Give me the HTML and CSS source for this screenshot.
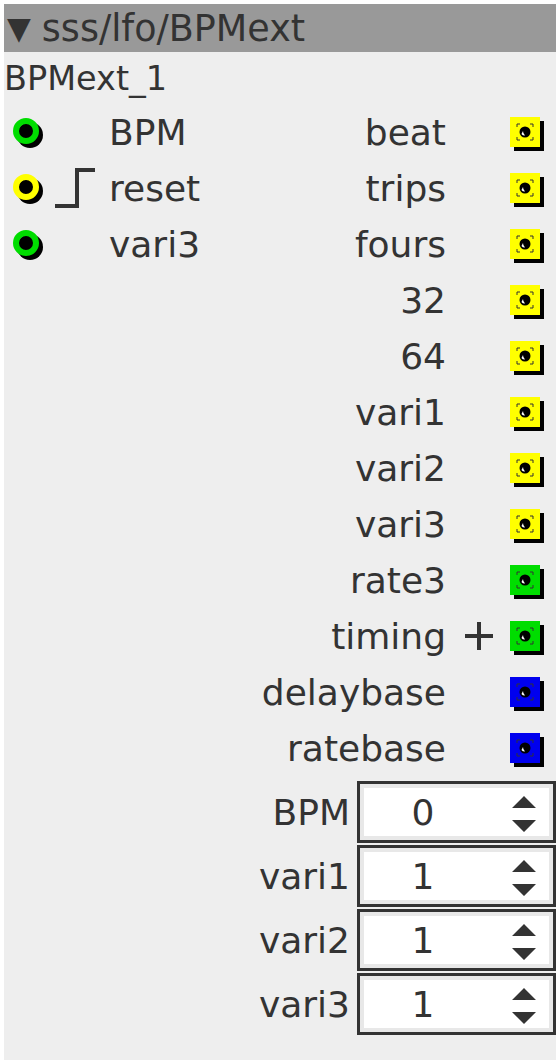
FILE: index.html
```html
<!DOCTYPE html>
<html lang="en">
<head>
  <meta charset="UTF-8" />
  <title>sss/lfo/BPMext</title>
  <link rel="stylesheet" href="styles.css">
</head>
<body>
  <div class="obj">
    <!-- header -->
    <div class="title"><span class="caret">▼</span><span>sss/lfo/BPMext</span></div>
    <div class="inst">BPMext_1</div>

    <div class="io">
      <!-- inlets -->
      <div class="inlets">
        <div class="inlet">
          <svg class="jack" width="32" height="32" viewBox="0 0 32 32"><circle cx="17" cy="17" r="13" fill="#000"/><circle cx="13" cy="13" r="10" fill="none" stroke="#00dd00" stroke-width="6"/></svg>
          <span class="gate"></span>
          <span class="label">BPM</span>
        </div>
        <div class="inlet">
          <svg class="jack" width="32" height="32" viewBox="0 0 32 32"><circle cx="17" cy="17" r="13" fill="#000"/><circle cx="13" cy="13" r="10" fill="none" stroke="#ffff00" stroke-width="6"/></svg>
          <svg class="gate" width="44" height="44" viewBox="0 0 44 44"><path d="M2 40 H24 V4 H42" fill="none" stroke="#333" stroke-width="4"/></svg>
          <span class="label">reset</span>
        </div>
        <div class="inlet">
          <svg class="jack" width="32" height="32" viewBox="0 0 32 32"><circle cx="17" cy="17" r="13" fill="#000"/><circle cx="13" cy="13" r="10" fill="none" stroke="#00dd00" stroke-width="6"/></svg>
          <span class="gate"></span>
          <span class="label">vari3</span>
        </div>
      </div>

      <!-- outlets -->
      <div class="outlets" id="outlets"></div>
    </div>

    <!-- parameters -->
    <div class="params" id="params"></div>
  </div>

  <script>
    const outlets = [
      { name: "beat", color: "#ffff00" },
      { name: "trips", color: "#ffff00" },
      { name: "fours", color: "#ffff00" },
      { name: "32", color: "#ffff00" },
      { name: "64", color: "#ffff00" },
      { name: "vari1", color: "#ffff00" },
      { name: "vari2", color: "#ffff00" },
      { name: "vari3", color: "#ffff00" },
      { name: "rate3", color: "#00dd00" },
      { name: "timing", color: "#00dd00", plus: true },
      { name: "delaybase", color: "#0000ee" },
      { name: "ratebase", color: "#0000ee" }
    ];

    const params = [
      { name: "BPM", value: 0 },
      { name: "vari1", value: 1 },
      { name: "vari2", value: 1 },
      { name: "vari3", value: 1 }
    ];

    const plusIcon = '<svg width="30" height="30" viewBox="0 0 30 30"><path d="M1 15 H29 M15 1 V29" stroke="#333" stroke-width="4"/></svg>';

    function outletIcon(color) {
      return `<svg class="port" width="34" height="34" viewBox="0 0 34 34">
        <rect x="4" y="4" width="30" height="30" fill="#000"/>
        <rect x="0" y="0" width="30" height="30" fill="${color}"/>
        <path d="M7 10 V7 H10 M20 7 H23 V10 M23 20 V23 H20 M10 23 H7 V20" fill="none" stroke="#333" stroke-width="1"/>
        <circle cx="15" cy="15" r="5.5" fill="#000"/>
        <path d="M11.5 17 A4 4 0 0 0 15 18.5 A6 6 0 0 1 13 14 Z" fill="#fff"/>
      </svg>`;
    }

    document.getElementById('outlets').innerHTML = outlets.map(o => `
      <div class="outlet">
        <span class="label">${o.name}</span>
        <span class="mark">${o.plus ? plusIcon : ''}</span>
        ${outletIcon(o.color)}
      </div>`).join('');

    document.getElementById('params').innerHTML = params.map(p => `
      <div class="param">
        <span class="label">${p.name}</span>
        <div class="spin">
          <span class="val">${p.value}</span>
          <svg class="arrows" width="26" height="36" viewBox="0 0 26 36"><path d="M1 12 L13 0 L25 12 Z M1 24 L25 24 L13 36 Z" fill="#333"/></svg>
        </div>
      </div>`).join('');
  </script>
</body>
</html>
```

FILE: styles.css
```css
* { margin: 0; padding: 0; box-sizing: border-box; }

body {
  background: #ffffff;
  font-family: 'DejaVu Sans', sans-serif;
  color: #333333;
}

.obj {
  margin: 4px;
  width: 552px;
  height: 1056px;
  background: #eeeeee;
  font-size: 36px;
}

.title {
  height: 48px;
  background: #999999;
  display: flex;
  align-items: center;
  gap: 11px;
  padding-left: 3px;
  font-size: 36.5px;
}

.caret {
  font-size: 31px;
}

.inst {
  height: 52px;
  display: flex;
  align-items: center;
  font-size: 33.5px;
}

.io {
  display: flex;
  justify-content: space-between;
}

.inlet, .outlet {
  height: 56px;
  display: flex;
  align-items: center;
}

.inlet {
  padding-left: 9px;
}

.jack {
  margin-top: 3px;
  margin-right: -2px;
}

.gate {
  display: block;
  width: 44px;
  height: 44px;
  margin-left: 10px;
  margin-right: 12px;
}

.outlets {
  padding-right: 12px;
}

.outlet {
  justify-content: flex-end;
}

.mark {
  width: 58px;
  display: flex;
  justify-content: center;
  padding-left: 8px;
}

.port {
  margin-left: 6px;
  margin-top: 4px;
}

.params {
  margin-top: 5px;
  display: flex;
  flex-direction: column;
  align-items: flex-end;
  gap: 2px;
}

.param {
  display: flex;
  align-items: center;
}

.param .label {
  margin-right: 7px;
}

.spin {
  width: 199px;
  height: 62px;
  border: 3px solid #333333;
  background: #ffffff;
  box-shadow: inset 0 0 0 4px #e8e8e8;
  display: flex;
  align-items: center;
}

.val {
  width: 126px;
  text-align: center;
}

.arrows {
  margin-left: 25px;
  margin-top: 3px;
}
```
